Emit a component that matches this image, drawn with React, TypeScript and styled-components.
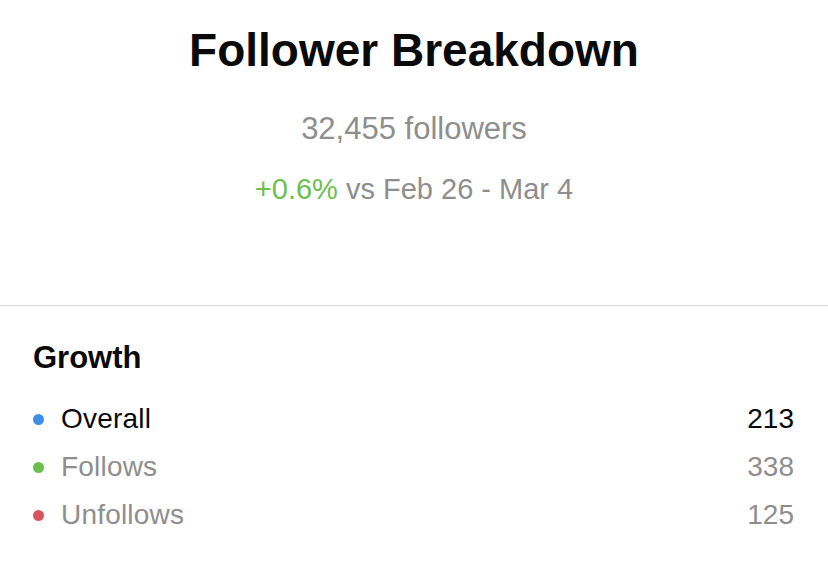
import styled, { createGlobalStyle } from "styled-components";

// global
const GlobalStyle = createGlobalStyle`
  html, body {
    margin: 0;
    padding: 0;
    background: #ffffff;
  }
  body {
    font-family: "Liberation Sans", Arial, sans-serif;
    -webkit-font-smoothing: antialiased;
  }
`;

// styles
const Page = styled.div`
  width: 828px;
  height: 587px;
  background: #ffffff;
  display: flex;
  flex-direction: column;
  overflow: hidden;
`;

const Header = styled.div`
  display: flex;
  flex-direction: column;
  align-items: center;
  padding-top: 22px;
  padding-bottom: 96px;
  border-bottom: 1px solid #d9d9d9;
`;

const Title = styled.h1`
  margin: 0;
  font-size: 46px;
  line-height: 56px;
  font-weight: 700;
  color: #0a0a0a;
`;

const Followers = styled.div`
  margin-top: 31px;
  font-size: 31px;
  line-height: 40px;
  color: #8e8e8e;
`;

const Delta = styled.div`
  margin-top: 20px;
  font-size: 29px;
  line-height: 40px;
  color: #8e8e8e;
`;

const Up = styled.span`
  color: #6cbf4e;
`;

const Section = styled.div`
  padding: 32px 34px 0 33px;
  display: flex;
  flex-direction: column;
`;

const SectionTitle = styled.h2`
  margin: 0 0 17px;
  font-size: 31px;
  line-height: 40px;
  font-weight: 700;
  color: #0a0a0a;
`;

const Row = styled.div`
  display: flex;
  align-items: center;
  height: 48px;
`;

const Dot = styled.span<{ $color: string }>`
  width: 11px;
  height: 11px;
  border-radius: 50%;
  background: ${(p) => p.$color};
  margin-right: 17px;
  flex: none;
`;

const Label = styled.span<{ $muted?: boolean }>`
  flex: 1;
  font-size: 28px;
  letter-spacing: 0.2px;
  color: ${(p) => (p.$muted ? "#8e8e8e" : "#0a0a0a")};
`;

const Value = styled.span<{ $muted?: boolean }>`
  font-size: 28px;
  color: ${(p) => (p.$muted ? "#8e8e8e" : "#0a0a0a")};
`;

type GrowthItem = {
  label: string;
  value: number;
  color: string;
  muted: boolean;
};

const growth: GrowthItem[] = [
  { label: "Overall", value: 213, color: "#3b8fe6", muted: false },
  { label: "Follows", value: 338, color: "#6cbf4a", muted: true },
  { label: "Unfollows", value: 125, color: "#d9545a", muted: true },
];

const App = () => {
  return (
    <Page>
      <GlobalStyle />
      <Header>
        <Title>Follower Breakdown</Title>
        <Followers>32,455 followers</Followers>
        <Delta>
          <Up>+0.6%</Up> vs Feb 26 - Mar 4
        </Delta>
      </Header>

      <Section>
        <SectionTitle>Growth</SectionTitle>
        {growth.map((item) => (
          <Row key={item.label}>
            <Dot $color={item.color} />
            <Label $muted={item.muted}>{item.label}</Label>
            <Value $muted={item.muted}>{item.value}</Value>
          </Row>
        ))}
      </Section>
    </Page>
  );
};

export default App;
